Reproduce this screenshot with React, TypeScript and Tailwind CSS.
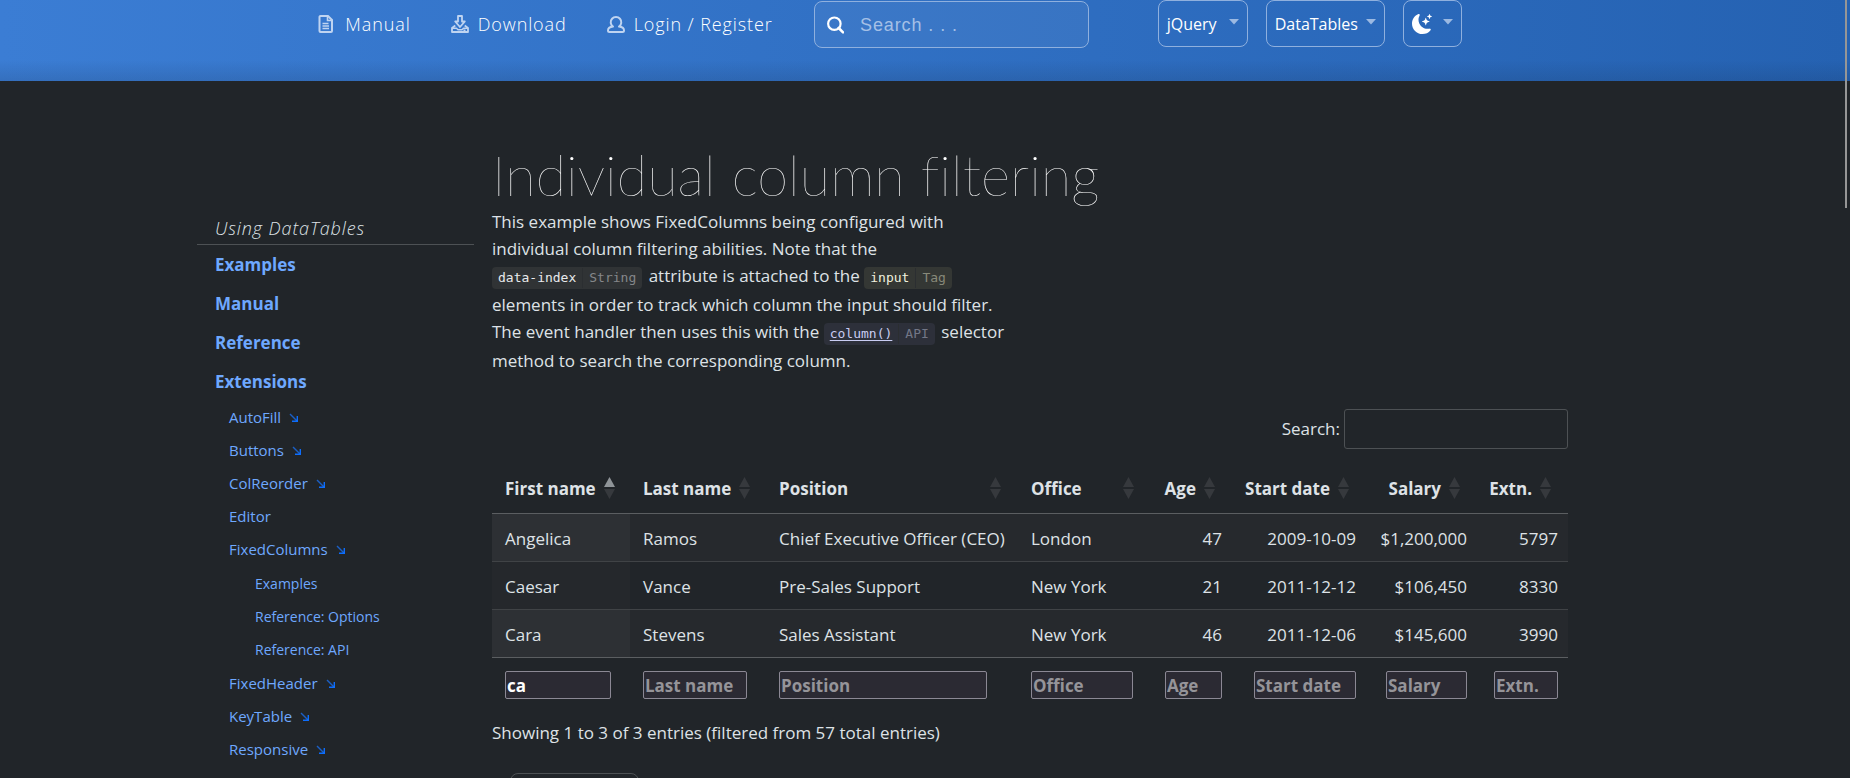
import React from "react";

type Column = {
  name: string;
  numeric?: boolean;
  col: string;
  field: string;
};

const columns: Column[] = [
  { name: "First name", col: "w-[138px]", field: "w-[106px]" },
  { name: "Last name", col: "w-[136px]", field: "w-[104px]" },
  { name: "Position", col: "w-[252px]", field: "w-[208px]" },
  { name: "Office", col: "w-[133px]", field: "w-[102px]" },
  { name: "Age", numeric: true, col: "w-[81px]", field: "w-[57px]" },
  { name: "Start date", numeric: true, col: "w-[134px]", field: "w-[102px]" },
  { name: "Salary", numeric: true, col: "w-[111px]", field: "w-[81px]" },
  { name: "Extn.", numeric: true, col: "w-[91px]", field: "w-[64px]" },
];

const rows = [
  ["Angelica", "Ramos", "Chief Executive Officer (CEO)", "London", "47", "2009-10-09", "$1,200,000", "5797"],
  ["Caesar", "Vance", "Pre-Sales Support", "New York", "21", "2011-12-12", "$106,450", "8330"],
  ["Cara", "Stevens", "Sales Assistant", "New York", "46", "2011-12-06", "$145,600", "3990"],
];

type Extension = { name: string; arrow?: boolean; children?: string[] };

const extensions: Extension[] = [
  { name: "AutoFill", arrow: true },
  { name: "Buttons", arrow: true },
  { name: "ColReorder", arrow: true },
  { name: "Editor" },
  { name: "FixedColumns", arrow: true, children: ["Examples", "Reference: Options", "Reference: API"] },
  { name: "FixedHeader", arrow: true },
  { name: "KeyTable", arrow: true },
  { name: "Responsive", arrow: true },
];

function ManualIcon() {
  return (
    <svg viewBox="0 0 18 18" className="size-[18px]" fill="none" stroke="currentColor" strokeWidth="2" aria-hidden="true">
      <path d="M2.500 1h7.500l4 4v11a1 1 0 0 1-1 1H2.500a1 1 0 0 1-1-1V2a1 1 0 0 1 1-1Z" />
      <path d="M9.500 1v4.500H14" strokeWidth="1.600" />
      <path d="M4.500 8.500h6M4.500 11h6.500M4.500 13.500h6.500" strokeWidth="1.600" />
    </svg>
  );
}

function DownloadIcon() {
  return (
    <svg viewBox="0 0 18 18" className="size-[18px]" fill="none" stroke="currentColor" strokeWidth="1.800" strokeLinejoin="round" aria-hidden="true">
      <path d="M7 1h4v5.500h2.800L9 12 4.200 6.500H7Z" />
      <path d="M4.300 10.500 1 13v4h16v-4l-3.300-2.500" />
      <path d="M1 13.200h4.500l1.500 1.500h4l1.500-1.500H17M12.500 15.300h2" strokeWidth="1.400" />
    </svg>
  );
}

function UserIcon() {
  return (
    <svg viewBox="0 0 18 18" className="size-[18px]" fill="none" stroke="currentColor" strokeWidth="2" strokeLinejoin="round" aria-hidden="true">
      <path d="M6 11.600A5.300 5.300 0 1 1 12 11.600C15.200 12 17 13.400 17 15.500a1.500 1.500 0 0 1-1.500 1.500h-13A1.500 1.500 0 0 1 1 15.500c0-2.100 1.800-3.500 5-3.900Z" />
    </svg>
  );
}

function SearchIcon() {
  return (
    <svg viewBox="0 0 20 20" className="size-5" fill="none" stroke="currentColor" strokeWidth="2.500" strokeLinecap="round" aria-hidden="true">
      <circle cx="8.500" cy="8.500" r="7.200" />
      <path d="m13.500 13.500 5 5" strokeWidth="3" />
    </svg>
  );
}

function MoonIcon() {
  return (
    <svg viewBox="0 0 16 16" className="size-5" fill="currentColor" aria-hidden="true">
      <path d="M6 .278a.77.77 0 0 1 .08.858 7.200 7.200 0 0 0-.878 3.460c0 4.021 3.278 7.277 7.318 7.277q.792-.001 1.533-.16a.79.79 0 0 1 .810.316.73.73 0 0 1-.031.893A8.350 8.350 0 0 1 8.344 16C3.734 16 0 12.286 0 7.710 0 4.266 2.114 1.312 5.124.060A.75.75 0 0 1 6 .278" />
      <path d="M10.794 3.148a.217.217 0 0 1 .412 0l.387 1.162c.173.518.579.924 1.097 1.097l1.162.387a.217.217 0 0 1 0 .412l-1.162.387a1.730 1.730 0 0 0-1.097 1.097l-.387 1.162a.217.217 0 0 1-.412 0l-.387-1.162A1.730 1.730 0 0 0 9.310 6.593l-1.162-.387a.217.217 0 0 1 0-.412l1.162-.387a1.730 1.730 0 0 0 1.097-1.097zM13.863.099a.145.145 0 0 1 .274 0l.258.774c.115.346.386.617.732.732l.774.258a.145.145 0 0 1 0 .274l-.774.258a1.160 1.160 0 0 0-.732.732l-.258.774a.145.145 0 0 1-.274 0l-.258-.774a1.160 1.160 0 0 0-.732-.732l-.774-.258a.145.145 0 0 1 0-.274l.774-.258c.346-.115.617-.386.732-.732z" />
    </svg>
  );
}

function Caret() {
  return (
    <svg viewBox="0 0 10 6" className="mb-1 h-1.5 w-2.5 text-[#9bb9e2]" fill="currentColor" aria-hidden="true">
      <path d="M0 0h10L5 5.500Z" />
    </svg>
  );
}

function CornerArrow() {
  return (
    <svg viewBox="0 0 10 10" className="size-2.5 text-[#0d6efd]" aria-hidden="true">
      <path d="M1 1l6.500 6.500" stroke="#1b5fc4" strokeWidth="1.400" fill="none" />
      <path d="M8.300 3v5.300H3" stroke="currentColor" strokeWidth="1.400" fill="none" />
      <path d="M9 9H5.500L9 5.500Z" fill="currentColor" />
    </svg>
  );
}

function SortIcon({ active }: { active?: boolean }) {
  return (
    <svg viewBox="0 0 11 22" className="h-[22px] w-[11px] shrink-0" aria-hidden="true">
      <path d="M5.500 0 11 10H0Z" fill={active ? "#8f9498" : "#36393d"} />
      <path d="M0 12h11L5.500 22Z" fill="#36393d" />
    </svg>
  );
}

function HeaderLink({ icon, label }: { icon: React.ReactNode; label: string }) {
  return (
    <a href="#" className="flex items-center gap-[9px] text-lg font-light tracking-wider text-white">
      <span className="text-[#bfd4f1]">{icon}</span>
      {label}
    </a>
  );
}

function Menu({ children, label, width }: { children: React.ReactNode; label: string; width: string }) {
  return (
    <button
      type="button"
      aria-label={label}
      className={`${width} flex h-[47px] items-center justify-between rounded-lg border border-[#8fb0de] px-2 text-base text-white`}
    >
      {children}
      <Caret />
    </button>
  );
}

const tones = {
  attribute: { box: "bg-[#303335]", name: "text-[#e8eaec]", kind: "text-[#85878a]" },
  tag: { box: "bg-[#343734]", name: "text-[#f0f1de]", kind: "text-[#88897a]" },
  api: { box: "bg-[#2d303a]", name: "text-[#c9cdf2] underline underline-offset-2", kind: "text-[#737787]" },
};

function CodeTag({ tone, name, kind, href }: { tone: keyof typeof tones; name: string; kind: string; href?: string }) {
  const t = tones[tone];
  return (
    <code className={`${t.box} mr-0.5 mb-0.5 inline-flex h-[22px] items-center rounded-sm font-['DejaVu_Sans_Mono',monospace] text-[13px] leading-5`}>
      {href ? (
        <a href={href} className={`${t.name} px-[6px]`}>{name}</a>
      ) : (
        <span className={`${t.name} px-[6px]`}>{name}</span>
      )}
      <span className={`${t.kind} border-l border-[#2b2e31] px-[6px]`}>{kind}</span>
    </code>
  );
}

function Header() {
  return (
    <header className="flex h-[81px] items-start justify-center bg-[linear-gradient(to_bottom,transparent_60px,rgba(20,40,70,0.16)_81px),linear-gradient(to_right,#3b7dd4,#2562b2)] pr-[70px]">
      <nav className="flex h-[47px] items-center gap-10" aria-label="Main">
        <HeaderLink icon={<ManualIcon />} label="Manual" />
        <HeaderLink icon={<DownloadIcon />} label="Download" />
        <HeaderLink icon={<UserIcon />} label="Login / Register" />
      </nav>
      <label className="mt-px ml-[41px] flex h-[47px] w-[275px] items-center gap-4 rounded-lg border border-[#8fb0de] bg-white/5 px-3 text-white">
        <SearchIcon />
        <input
          type="search"
          aria-label="Search site"
          placeholder="Search . . ."
          className="w-full min-w-0 bg-transparent font-['Liberation_Sans',sans-serif] text-lg tracking-wider outline-none placeholder:text-[#a5c0e6]"
        />
      </label>
      <div className="ml-[69px] flex gap-[18px]">
        <Menu label="Framework" width="w-[90px]">jQuery</Menu>
        <Menu label="Styling" width="w-[119px]">DataTables</Menu>
        <Menu label="Colour scheme" width="w-[59px]"><MoonIcon /></Menu>
      </div>
    </header>
  );
}

function Sidebar() {
  return (
    <aside className="w-[277px] shrink-0 pt-[131px] text-[#6ea8fe]">
      <h2 className="flex h-[33px] items-center border-b border-[#4d5154] pl-[18px] text-lg font-light tracking-wider text-[#dee2e6] italic">
        Using DataTables
      </h2>
      <ul className="pl-[18px]">
        {["Examples", "Manual", "Reference", "Extensions"].map((item) => (
          <li key={item} className="flex h-[39px] items-center text-[17px] font-bold">
            <a href="#">{item}</a>
          </li>
        ))}
        {extensions.map((ext) => (
          <li key={ext.name} className="pl-[14px]">
            <a href="#" className="flex h-[33px] items-center gap-2 text-[15px]">
              {ext.name}
              {ext.arrow && <CornerArrow />}
            </a>
            {ext.children && (
              <ul className="pt-px pb-px pl-[26px]">
                {ext.children.map((child) => (
                  <li key={child} className="flex h-[33px] items-center text-sm">
                    <a href="#">{child}</a>
                  </li>
                ))}
              </ul>
            )}
          </li>
        ))}
      </ul>
    </aside>
  );
}

function FilterTable() {
  return (
    <table className="mt-[11px] w-full table-fixed border-collapse">
      <colgroup>
        {columns.map((c) => (
          <col key={c.name} className={c.col} />
        ))}
      </colgroup>
      <thead>
        <tr className="h-[53px] border-b border-[#5b5e61]">
          {columns.map((c, i) => (
            <th key={c.name} className="pt-1 pr-[17px] pl-[13px]" aria-sort={i === 0 ? "ascending" : "none"}>
              <button
                type="button"
                className={`flex w-full items-center gap-2 font-bold whitespace-nowrap ${c.numeric ? "justify-end" : "justify-between"}`}
              >
                {c.name}
                <SortIcon active={i === 0} />
              </button>
            </th>
          ))}
        </tr>
      </thead>
      <tbody>
        {rows.map((row) => (
          <tr key={row[0]} className="h-12 border-b border-[#404346] last:border-[#5b5e61] odd:bg-[#26292d] even:bg-[#212529] [&>td:first-child]:bg-[#25282c] odd:[&>td:first-child]:bg-[#2d3034]">
            {row.map((cell, i) => (
              <td key={columns[i].name} className={`pt-[3px] pr-[10px] pl-[13px] whitespace-nowrap ${columns[i].numeric ? "text-right" : ""}`}>
                {cell}
              </td>
            ))}
          </tr>
        ))}
      </tbody>
      <tfoot>
        <tr className="h-14">
          {columns.map((c, i) => (
            <th key={c.name} className={`pr-[10px] pl-[13px] ${c.numeric ? "text-right" : "text-left"}`}>
              <input
                type="text"
                aria-label={`Filter ${c.name}`}
                placeholder={c.name}
                defaultValue={i === 0 ? "ca" : ""}
                className={`${c.field} block h-7 rounded-xs border border-[#8b8894] bg-[#2b2a33] px-px font-bold text-white outline-none placeholder:text-[#959499] ${c.numeric ? "ml-auto" : ""}`}
              />
            </th>
          ))}
        </tr>
      </tfoot>
    </table>
  );
}

export default function App() {
  return (
    <div className="relative h-screen overflow-hidden bg-[#212529] font-['Open_Sans','Noto_Sans',sans-serif] text-[17px] text-[#dee2e6]">
      <Header />
      <div className="mx-auto flex max-w-[1456px] gap-[18px]">
        <Sidebar />
        <main className="min-w-0 flex-1 pt-[61px] pr-[85px]">
          <h1 className="font-['Lato',sans-serif] text-[56px] leading-[66px] font-extralight whitespace-nowrap text-white [font-variant-ligatures:none]">
            Individual column filtering
          </h1>
          <p className="max-w-[530px] leading-[27px]">
            This example shows FixedColumns being configured with
            <br />
            individual column filtering abilities. Note that the
            <br />
            <CodeTag tone="attribute" name="data-index" kind="String" /> attribute is attached to the{" "}
            <CodeTag tone="tag" name="input" kind="Tag" />
            <br />
            elements in order to track which column the input should filter.
            <br />
            The event handler then uses this with the <CodeTag tone="api" name="column()" kind="API" href="#" /> selector
            <br />
            method to search the corresponding column.
          </p>
          <div className="mt-[35px] flex items-center justify-end gap-1">
            <label htmlFor="table-search">Search:</label>
            <input
              id="table-search"
              type="search"
              className="h-10 w-[224px] rounded-[3px] border border-[#4d5154] bg-transparent px-2 outline-none"
            />
          </div>
          <FilterTable />
          <p className="mt-2 leading-6">Showing 1 to 3 of 3 entries (filtered from 57 total entries)</p>
          <select
            aria-label="Page length"
            className="mt-7 ml-[18px] h-10 w-[129px] appearance-none rounded-lg border border-[#4d5154] bg-transparent"
          />
        </main>
      </div>
      <div className="absolute top-0 right-[3px] h-[208px] w-0.5 bg-[#969696]" />
    </div>
  );
}
